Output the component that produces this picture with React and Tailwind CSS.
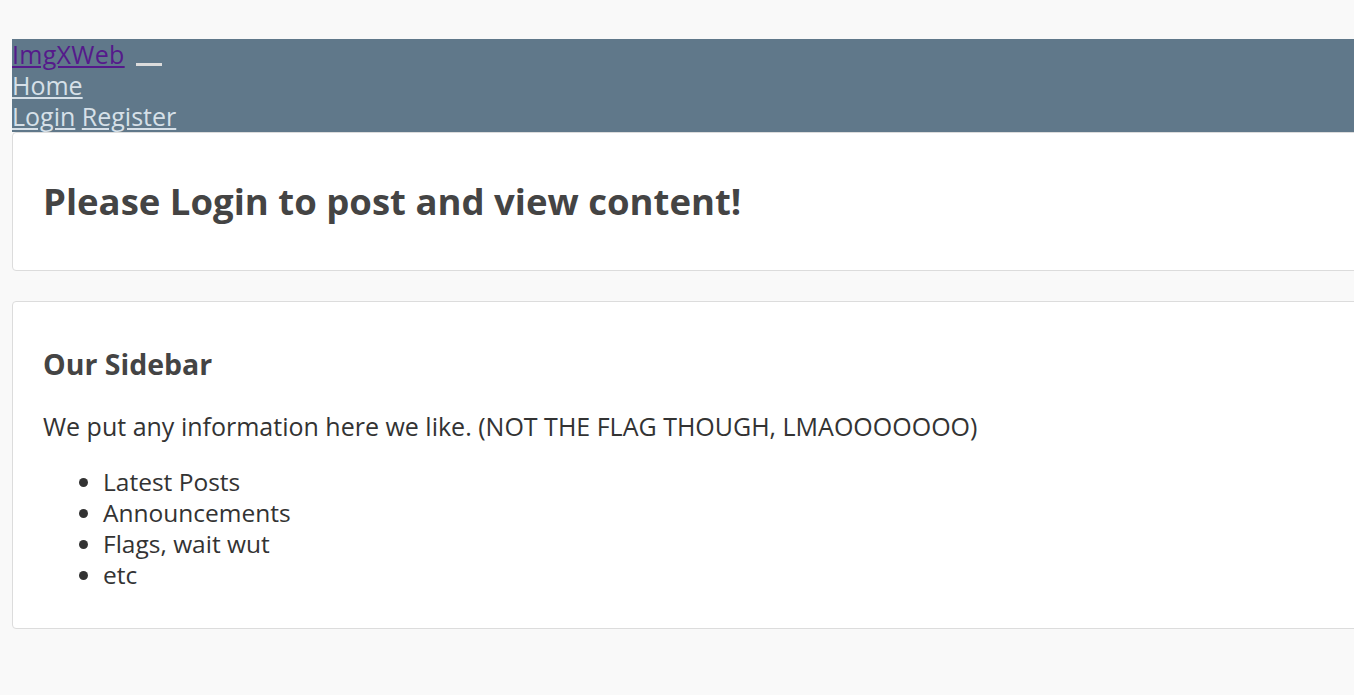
export default function App() {
  return (
    <div className="min-h-screen overflow-x-hidden bg-[#f9f9f9] text-[#333] pt-[39px]" style={{ fontFamily: '"Open Sans", "Noto Sans", sans-serif' }}>
      <div className="ml-[12px] w-[1400px]">
        {/* Nav */}
        <nav className="bg-[#60788a] text-[25px] leading-[31px]">
          <div className="flex items-start">
            <a href="#" className="text-[#551a8b] underline tracking-[0.3px]">ImgXWeb</a>
            <button className="ml-[11px] mt-[24px] flex flex-col">
              <span className="block w-[26px] h-[3px] bg-[#dcdcdc]" />
            </button>
          </div>
          <div>
            <a href="#" className="text-[#d6e0e8] underline">Home</a>
          </div>
          <div>
            <a href="#" className="text-[#d6e0e8] underline">Login</a>{' '}
            <a href="#" className="text-[#d6e0e8] underline">Register</a>
          </div>
        </nav>

        {/* Main card */}
        <div className="bg-white border border-[#dcdcdc] rounded-l-[4px] px-[30px] pt-[45px] pb-[46px]">
          <h1 className="text-[36.5px] leading-[46px] font-bold text-[#444]">Please Login to post and view content!</h1>
        </div>

        {/* Sidebar card */}
        <div className="mt-[30px] bg-white border border-[#dcdcdc] rounded-l-[4px] px-[30px] pt-[45px] pb-[38px]">
          <h3 className="text-[28.5px] leading-[34px] font-bold text-[#444]">Our Sidebar</h3>
          <p className="mt-[30px] text-[25px] leading-[31px]">
            We put any information here we like. (NOT THE FLAG THOUGH, LMAOOOOOOO)
          </p>
          <ul className="mt-[24px] list-disc pl-[60px] text-[24.5px] leading-[31px]">
            <li>Latest Posts</li>
            <li>Announcements</li>
            <li>Flags, wait wut</li>
            <li>etc</li>
          </ul>
        </div>
      </div>
    </div>
  );
}
